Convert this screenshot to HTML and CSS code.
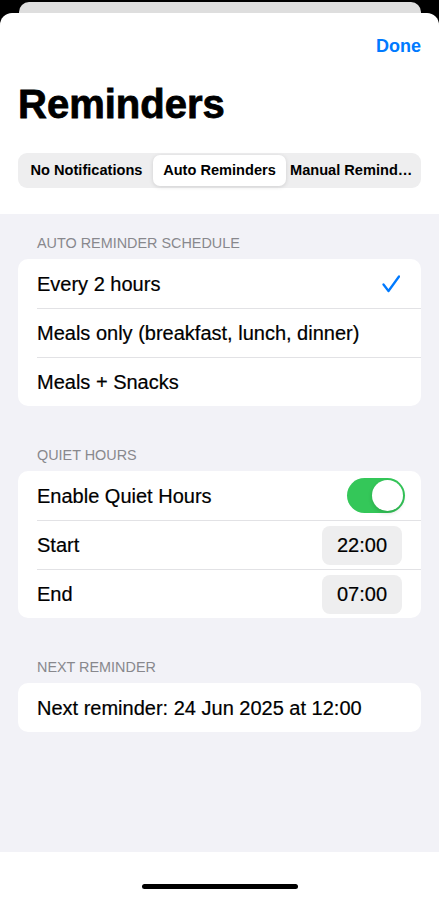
FILE: index.html
```html
<!DOCTYPE html>
<html lang="en">
  <head>
    <meta charset="utf-8">
    <title>Reminders</title>
    <link rel="stylesheet" href="styles.css">
  </head>
  <body>
    <div class="back-card"></div>
    <div class="sheet">
      <div class="sheet-top">
        <div class="nav">
          <span class="done">Done</span>
        </div>
        <h1 class="title">Reminders</h1>
        <div class="segmented">
          <div class="segment">No Notifications</div>
          <div class="segment selected">Auto Reminders</div>
          <div class="segment">Manual Reminders</div>
        </div>
      </div>

      <div class="settings">
        <div class="group">
          <div class="group-title">AUTO REMINDER SCHEDULE</div>
          <div class="card">
            <div class="row">
              <span>Every 2 hours</span>
              <svg class="check" width="18" height="18" viewBox="0 0 18 18">
                <path d="M1.5 9.5 L6.5 16 L17 1.5" fill="none" stroke="#007aff" stroke-width="2.3" stroke-linecap="round" stroke-linejoin="round"/>
              </svg>
            </div>
            <div class="row">
              <span>Meals only (breakfast, lunch, dinner)</span>
            </div>
            <div class="row">
              <span>Meals + Snacks</span>
            </div>
          </div>
        </div>

        <div class="group">
          <div class="group-title">QUIET HOURS</div>
          <div class="card">
            <div class="row row-toggle">
              <span>Enable Quiet Hours</span>
              <div class="toggle on"><div class="knob"></div></div>
            </div>
            <div class="row">
              <span>Start</span>
              <span class="time-pill">22:00</span>
            </div>
            <div class="row">
              <span>End</span>
              <span class="time-pill">07:00</span>
            </div>
          </div>
        </div>

        <div class="group">
          <div class="group-title">NEXT REMINDER</div>
          <div class="card">
            <div class="row">
              <span>Next reminder: 24 Jun 2025 at 12:00</span>
            </div>
          </div>
        </div>
      </div>

      <div class="home-bar">
        <div class="home-indicator"></div>
      </div>
    </div>
  </body>
</html>
```

FILE: styles.css
```css
html, body {
    margin: 0;
    padding: 0;
}

body {
    width: 439px;
    height: 899px;
    overflow: hidden;
    background-color: #000;
    font-family: "Liberation Sans", Arial, sans-serif;
    color: #000;
}

.back-card {
    height: 11px;
    margin: 2px 18px 0 19px;
    background-color: #dedede;
    border-radius: 10px 10px 0 0;
}

.sheet {
    height: 886px;
    background-color: #fff;
    border-radius: 12px 12px 0 0;
    display: flex;
    flex-direction: column;
    overflow: hidden;
}

.sheet-top {
    padding: 0 18px 26px;
}

.nav {
    display: flex;
    justify-content: flex-end;
    padding-top: 22px;
}

.done {
    font-size: 18px;
    line-height: 22px;
    font-weight: 700;
    color: #007aff;
}

.title {
    margin: 23px 0 0;
    font-size: 40px;
    line-height: 48px;
    font-weight: 700;
    -webkit-text-stroke: 0.8px #000;
}

.segmented {
    margin-top: 25px;
    height: 35px;
    box-sizing: border-box;
    padding: 2px;
    display: flex;
    background-color: #eeeeef;
    border-radius: 9px;
}

.segment {
    flex: 1;
    min-width: 0;
    padding: 0 4px;
    font-size: 14.6px;
    font-weight: 700;
    line-height: 31px;
    text-align: center;
    white-space: nowrap;
    overflow: hidden;
    text-overflow: ellipsis;
}

.segment.selected {
    background-color: #fff;
    border-radius: 7px;
    box-shadow: 0 1px 4px rgba(0, 0, 0, 0.13);
}

.settings {
    flex: 1;
    background-color: #f2f2f7;
    padding: 20px 18px 0;
}

.group + .group {
    margin-top: 40px;
}

.group-title {
    padding: 0 19px;
    margin-bottom: 7px;
    font-size: 14.4px;
    line-height: 18px;
    color: #88888d;
}

.card {
    background-color: #fff;
    border-radius: 10px;
    overflow: hidden;
}

.row {
    height: 49px;
    box-sizing: border-box;
    margin-left: 19px;
    padding-right: 19px;
    display: flex;
    align-items: center;
    justify-content: space-between;
    font-size: 20px;
    line-height: 24px;
    -webkit-text-stroke: 0.2px #000;
}

.row + .row {
    border-top: 1px solid #e2e2e5;
}

.row-toggle {
    padding-right: 16px;
}

.check {
    margin-right: 2px;
}

.toggle {
    width: 58px;
    height: 35px;
    border-radius: 18px;
    background-color: #e4e4e8;
    position: relative;
}

.toggle.on {
    background-color: #34c759;
}

.knob {
    position: absolute;
    top: 2px;
    right: 2px;
    width: 31px;
    height: 31px;
    border-radius: 50%;
    background-color: #fff;
    box-shadow: 0 2px 4px rgba(0, 0, 0, 0.15);
}

.time-pill {
    width: 80px;
    height: 39px;
    line-height: 39px;
    text-align: center;
    background-color: #eeeeef;
    border-radius: 8px;
}

.home-bar {
    height: 47px;
    box-sizing: border-box;
    padding-top: 32px;
    display: flex;
    justify-content: center;
}

.home-indicator {
    width: 156px;
    height: 5px;
    border-radius: 3px;
    background-color: #000;
}
```
